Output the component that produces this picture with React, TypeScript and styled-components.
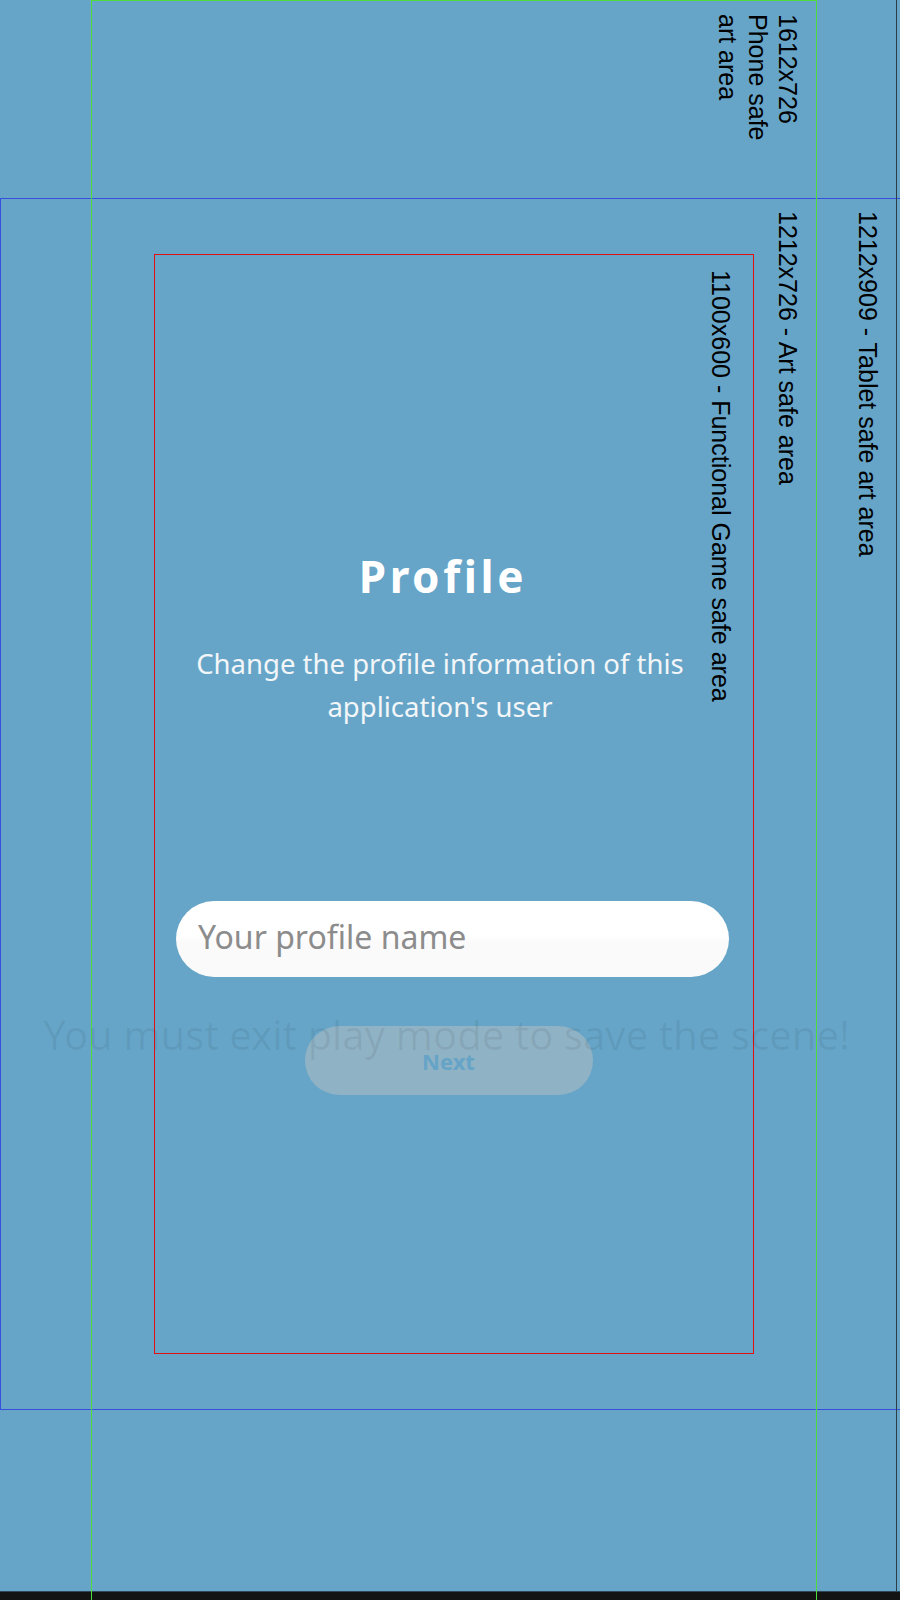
import React from "react";
import styled, { createGlobalStyle } from "styled-components";

const GlobalStyle = createGlobalStyle`
  html, body {
    margin: 0;
    padding: 0;
    background: #66a5c8;
  }
  body {
    font-family: "Noto Sans", "Open Sans", sans-serif;
  }
`;

const Screen = styled.div`
  position: relative;
  width: 900px;
  height: 1600px;
  overflow: hidden;
  display: flex;
  flex-direction: column;
  background: #66a5c8;
`;

const Stage = styled.main`
  position: relative;
  flex: 1;
`;

const BottomBar = styled.footer`
  flex-shrink: 0;
  height: 8px;
  background: #131313;
  border-top: 1px solid #2f4757;
`;

const EdgeLine = styled.div`
  position: absolute;
  top: 0;
  bottom: 0;
  left: 896px;
  width: 1px;
  background: #2d3d48;
`;

type GuideProps = {
  $left: number;
  $top: number;
  $width: number;
  $height: number;
  $color: string;
  $padTop: number;
  $padRight: number;
};

/* Safe-area guide rectangles sit on the editor canvas at their own coordinates */
const GuideBox = styled.div<GuideProps>`
  position: absolute;
  box-sizing: border-box;
  left: ${(p) => p.$left}px;
  top: ${(p) => p.$top}px;
  width: ${(p) => p.$width}px;
  height: ${(p) => p.$height}px;
  border: 1px solid ${(p) => p.$color};
  padding: ${(p) => p.$padTop}px ${(p) => p.$padRight}px 0 0;
  display: flex;
  justify-content: flex-end;
  align-items: flex-start;
  pointer-events: none;
`;

const GuideLabel = styled.span<{ $length?: number }>`
  writing-mode: vertical-rl;
  font-family: "Liberation Sans", Arial, sans-serif;
  font-size: 25px;
  line-height: 30px;
  color: #000;
  white-space: ${(p) => (p.$length ? "normal" : "nowrap")};
  ${(p) => (p.$length ? `height: ${p.$length}px;` : "")}
`;

const Panel = styled.section`
  width: 553px;
  margin-left: 176px;
  padding-top: 550px;
  display: flex;
  flex-direction: column;
`;

const Title = styled.h1`
  margin: 0;
  padding-right: 19px;
  text-align: center;
  font-family: "Noto Sans", "Open Sans", sans-serif;
  font-weight: 700;
  font-size: 44px;
  line-height: 52px;
  letter-spacing: 3.6px;
  color: #ffffff;
`;

const Subtitle = styled.p`
  margin: 40px 0 0;
  padding-right: 25px;
  text-align: center;
  font-family: "Noto Sans", "Open Sans", sans-serif;
  font-weight: 400;
  font-size: 27.5px;
  line-height: 43px;
  color: #f3f6f8;
`;

const NameInput = styled.input`
  margin-top: 173px;
  height: 76px;
  box-sizing: border-box;
  border: none;
  border-radius: 38px;
  padding: 0 22px 5px;
  background: linear-gradient(#ffffff 0%, #ffffff 45%, #fafafa 55%, #fafafa 100%);
  font-family: "Noto Sans", "Open Sans", sans-serif;
  font-size: 32px;
  color: #444;
  outline: none;
  &::placeholder {
    color: #8c8c8c;
  }
`;

const NextButton = styled.button`
  align-self: center;
  margin: 49px 8px 0 0;
  width: 288px;
  height: 69px;
  border: none;
  border-radius: 35px;
  background: #8fb2c5;
  color: #65a4c7;
  font-family: "Noto Sans", "Open Sans", sans-serif;
  font-weight: 700;
  font-size: 22px;
  cursor: pointer;
`;

/* Editor notification drawn over the game view */
const Notice = styled.div`
  position: absolute;
  left: 0;
  right: 0;
  top: 1011px;
  padding-right: 7px;
  text-align: center;
  white-space: nowrap;
  font-family: "Noto Sans", "Open Sans", sans-serif;
  font-size: 40px;
  line-height: 48px;
  color: rgba(0, 0, 0, 0.06);
  pointer-events: none;
`;

export default function App() {
  return (
    <>
      <GlobalStyle />
      <Screen>
        <Stage>
          <Panel>
            <Title>Profile</Title>
            <Subtitle>Change the profile information of this application's user</Subtitle>
            <NameInput placeholder="Your profile name" />
            <NextButton type="button">Next</NextButton>
          </Panel>

          <GuideBox $left={0} $top={198} $width={909} $height={1212} $color="#3a4fe0" $padTop={12} $padRight={25}>
            <GuideLabel>1212x909 - Tablet safe art area</GuideLabel>
          </GuideBox>
          <GuideBox $left={91} $top={0} $width={726} $height={1612} $color="#4ddc3c" $padTop={13} $padRight={13}>
            <GuideLabel $length={150}>1612x726 Phone safe art area</GuideLabel>
          </GuideBox>
          <GuideBox $left={91} $top={198} $width={726} $height={1212} $color="transparent" $padTop={12} $padRight={13}>
            <GuideLabel>1212x726 - Art safe area</GuideLabel>
          </GuideBox>
          <GuideBox $left={154} $top={254} $width={600} $height={1100} $color="#e01010" $padTop={15} $padRight={17}>
            <GuideLabel>1100x600 - Functional Game safe area</GuideLabel>
          </GuideBox>

          <Notice>You must exit play mode to save the scene!</Notice>
          <EdgeLine />
        </Stage>
        <BottomBar />
      </Screen>
    </>
  );
}
